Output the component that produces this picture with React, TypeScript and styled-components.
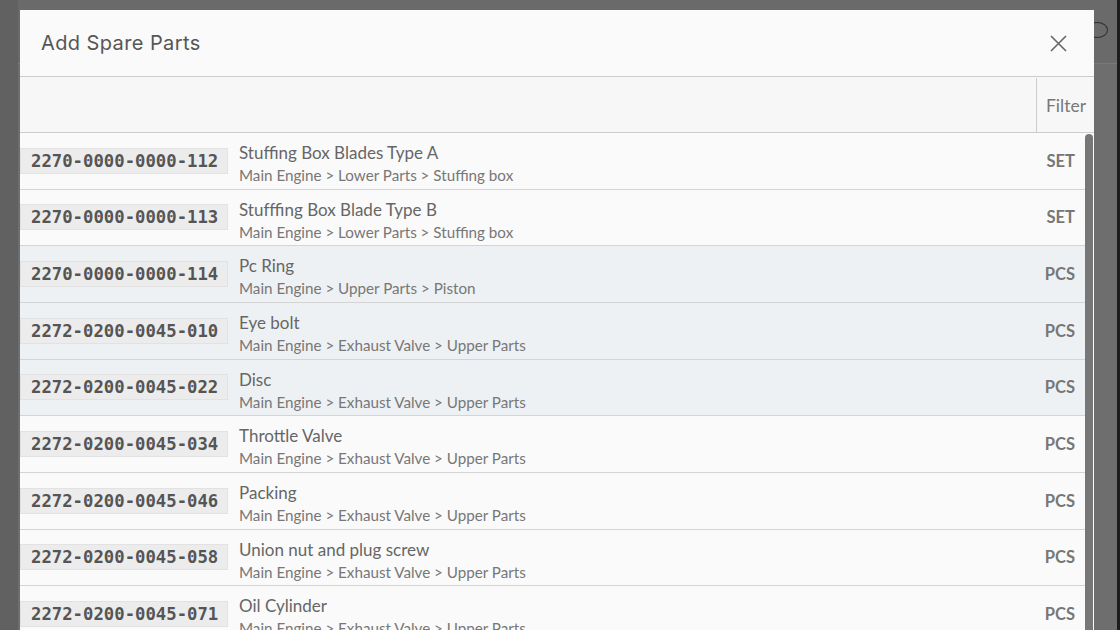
import React from 'react';
import styled, { createGlobalStyle } from 'styled-components';

// Styles
const GlobalStyle = createGlobalStyle`
  html, body {
    margin: 0;
    padding: 0;
    height: 100%;
    overflow: hidden;
  }
  #root {
    height: 100%;
  }
`;

const Page = styled.div`
  width: 1120px;
  height: 630px;
  display: grid;
  grid-template-columns: 18px 1fr 3px;
  grid-template-rows: 64px 1fr;
  background: #6d6e6d;
`;

const SideStrip = styled.div`
  grid-row: 1 / 3;
  grid-column: 1;
  background: #606160;
`;

const TopBar = styled.div`
  grid-row: 1;
  grid-column: 2;
  background: #696a69;
  border-bottom: 1px solid #7a7a7a;
  display: flex;
  justify-content: flex-end;
  align-items: center;
  padding-right: 6px;
`;

const Ring = styled.div`
  width: 20px;
  height: 14px;
  border: 1.5px solid #2e2e2e;
  border-radius: 50%;
  margin-right: 3px;
  margin-top: -4px;
`;

const EdgeStrip = styled.div`
  grid-row: 1 / 3;
  grid-column: 3;
  background: #1d1d1d;
`;

const Modal = styled.div`
  position: fixed;
  top: 10px;
  left: 20px;
  width: 1074px;
  display: flex;
  flex-direction: column;
  background: #fafafa;
  font-family: Lato, 'Open Sans', sans-serif;
`;

const Header = styled.div`
  height: 66px;
  display: flex;
  align-items: center;
  justify-content: space-between;
  padding: 0 27px 0 21px;
  border-bottom: 1px solid #cccccc;
`;

const Title = styled.h3`
  margin: 0;
  font-family: Inter, 'Noto Sans', sans-serif;
  font-size: 20px;
  font-weight: 400;
  letter-spacing: 0.4px;
  color: #565656;
`;

const CloseButton = styled.button`
  border: none;
  background: transparent;
  padding: 0;
  width: 18px;
  height: 18px;
  display: flex;
  align-items: center;
  justify-content: center;
  color: #666;
`;

const FilterRow = styled.div`
  height: 55px;
  display: flex;
  justify-content: flex-end;
  background: #f7f7f7;
  border-bottom: 1px solid #cccccc;
`;

const FilterCell = styled.div`
  width: 58px;
  display: flex;
  align-items: center;
  padding-left: 9px;
  box-sizing: border-box;
  border-left: 1px solid #cccccc;
  font-size: 17.5px;
  color: #777;
  margin-top: 1px;
`;

const ListArea = styled.div`
  height: 560px;
  display: flex;
  overflow: hidden;
`;

const List = styled.div`
  flex: 1;
`;

const ScrollTrack = styled.div`
  width: 9px;
  padding: 1px 1px 0 0;
  box-sizing: border-box;
  background: #fafafa;
`;

const Thumb = styled.div`
  height: 100%;
  background: #777;
  border-radius: 4px 4px 0 0;
`;

const Row = styled.div<{ $selected?: boolean }>`
  height: 56.67px;
  box-sizing: border-box;
  display: flex;
  align-items: center;
  border-bottom: 1px solid #d4d4d4;
  background: ${(p) => (p.$selected ? '#eef1f3' : '#fafafa')};
  padding-right: 10px;
`;

const PartNo = styled.div`
  width: 208px;
  height: 26px;
  box-sizing: border-box;
  display: flex;
  align-items: center;
  padding-left: 10px;
  background: #ececec;
  border: 1px solid #e2e2e2;
  font-family: 'DejaVu Sans Mono', monospace;
  font-weight: bold;
  font-size: 17.3px;
  color: #555;
`;

const Info = styled.div`
  flex: 1;
  align-self: flex-start;
  padding: 8px 0 0 11px;
`;

const Name = styled.div`
  font-size: 17px;
  line-height: 23px;
  color: #666;
`;

const Path = styled.div`
  font-size: 15.2px;
  line-height: 23px;
  color: #777;
`;

const Unit = styled.div`
  font-size: 16.5px;
  font-weight: bold;
  color: #777;
`;

// Data
const lower = 'Main Engine > Lower Parts > Stuffing box';
const exhaust = 'Main Engine > Exhaust Valve > Upper Parts';

const parts = [
  { no: '2270-0000-0000-112', name: 'Stuffing Box Blades Type A', path: lower, unit: 'SET' },
  { no: '2270-0000-0000-113', name: 'Stufffing Box Blade Type B', path: lower, unit: 'SET' },
  { no: '2270-0000-0000-114', name: 'Pc Ring', path: 'Main Engine > Upper Parts > Piston', unit: 'PCS', selected: true },
  { no: '2272-0200-0045-010', name: 'Eye bolt', path: exhaust, unit: 'PCS', selected: true },
  { no: '2272-0200-0045-022', name: 'Disc', path: exhaust, unit: 'PCS', selected: true },
  { no: '2272-0200-0045-034', name: 'Throttle Valve', path: exhaust, unit: 'PCS' },
  { no: '2272-0200-0045-046', name: 'Packing', path: exhaust, unit: 'PCS' },
  { no: '2272-0200-0045-058', name: 'Union nut and plug screw', path: exhaust, unit: 'PCS' },
  { no: '2272-0200-0045-071', name: 'Oil Cylinder', path: exhaust, unit: 'PCS' },
];

// Component
const App = () => {
  return (
    <>
      <GlobalStyle />
      <Page>
        <SideStrip />
        <TopBar>
          <Ring />
        </TopBar>
        <EdgeStrip />
      </Page>
      <Modal>
        <Header>
          <Title>Add Spare Parts</Title>
          <CloseButton aria-label="Close">
            <svg width="17" height="17" viewBox="0 0 17 17">
              <path d="M1 1L16 16M16 1L1 16" stroke="currentColor" strokeWidth="1.6" fill="none" />
            </svg>
          </CloseButton>
        </Header>
        <FilterRow>
          <FilterCell>Filter</FilterCell>
        </FilterRow>
        <ListArea>
          <List>
            {parts.map((p) => (
              <Row key={p.no} $selected={p.selected}>
                <PartNo>{p.no}</PartNo>
                <Info>
                  <Name>{p.name}</Name>
                  <Path>{p.path}</Path>
                </Info>
                <Unit>{p.unit}</Unit>
              </Row>
            ))}
          </List>
          <ScrollTrack>
            <Thumb />
          </ScrollTrack>
        </ListArea>
      </Modal>
    </>
  );
};

export default App;
